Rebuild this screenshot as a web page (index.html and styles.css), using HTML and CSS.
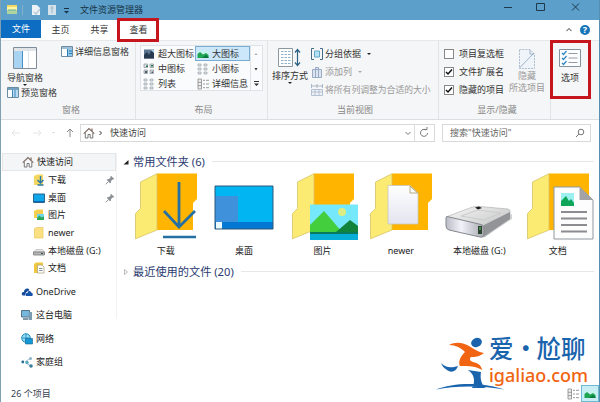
FILE: index.html
```html
<!DOCTYPE html>
<html lang="zh-CN">
<head>
<meta charset="utf-8">
<title>文件资源管理器</title>
<link rel="stylesheet" href="styles.css">
</head>
<body>
<svg class="defs" width="0" height="0">
  <defs>
    <linearGradient id="top" x1="0" y1="0" x2="1" y2="1"><stop offset="0" stop-color="#f7f7f7"/><stop offset="1" stop-color="#b9babb"/></linearGradient>
    <linearGradient id="front" x1="0" y1="0" x2="1" y2="0"><stop offset="0" stop-color="#b8bbc4"/><stop offset=".4" stop-color="#f2f2fa"/><stop offset="1" stop-color="#a6a8ae"/></linearGradient>
    <linearGradient id="paper" x1="0" y1="0" x2="0" y2="1"><stop offset="0" stop-color="#fff"/><stop offset="1" stop-color="#e3e5ef"/></linearGradient>
    <symbol id="folder" viewBox="0 0 78 68">
      <path d="M30 1.5H70V27L66 31V58H30Z" fill="#ffb500"/>
      <path d="M13.5 10 30 1.7V58L8.5 66.8V41.5L13.5 36.5Z" fill="#fbeb72" stroke="#d8c465" stroke-width=".8"/>
    </symbol>
    <symbol id="home" viewBox="0 0 12 12">
      <path d="M2.3 6V11H5V7.5H7.2V11H9.8V6" fill="#fff" stroke="#777" stroke-width="1"/>
      <path d="M.8 6.6 6 1.5 11.3 6.6M9 1.5V4" fill="none" stroke="#7d6a62" stroke-width="1.2"/>
    </symbol>
    <symbol id="pin" viewBox="0 0 10 10">
      <path d="M6 .8 9.3 4 8.3 4.6 7.6 4.4 6 6.1 5.8 8 5 8.2 1.9 5.1 2.2 4.3 4 4 5.6 2.4 5.4 1.7Z" fill="#8a9096"/><path d="M3.5 6.6.8 9.3" stroke="#8a9096"/>
    </symbol>
    <symbol id="tiles" viewBox="0 0 12 12">
      <g fill="#dde2e6" stroke="#9fa7ae" stroke-width=".7"><path d="M1 1H4V3H1ZM1 5H4V7H1ZM1 9H4V11H1ZM7 1H10V3H7ZM7 5H10V7H7ZM7 9H10V11H7Z"/></g>
    </symbol>
    <symbol id="rows" viewBox="0 0 12 12">
      <path d="M1 1H4.5V11H1ZM1 4.3H4.5M1 7.6H4.5" fill="#eee" stroke="#888" stroke-width=".8"/><path d="M6 2.3H8M9 2.3H12M6 6H8M9 6H12M6 9.7H8M9 9.7H12" stroke="#999"/>
    </symbol>
    <symbol id="pic" viewBox="0 0 12 12">
      <path d="M.5 2.5H11.5V10H.5Z" fill="#c6f2ef"/><path d="M.5 9.5V6L3 4 6 6.5 9 5 11.5 7V10H.5Z" fill="#20a652"/><path d="M5 10 9 7 11.5 9V10Z" fill="#08793f"/>
    </symbol>
  </defs>
</svg>

<div class="window">
  <header class="titlebar">
    <svg class="quick" width="74" height="20" viewBox="0 0 74 20">
      <path d="M7 5H17V14H7Z" fill="#fff3a4"/><path d="M7 5H17V7H7Z" fill="#f3d763"/><path d="M8 14V10H16V14M10 10V14M12 10V14M14 10V14" stroke="#61b59d" fill="none"/>
      <path d="M22.5 5V15" stroke="#82b1cd"/>
      <path d="M32 5H37L40 8V15H32Z" fill="#edf2f6"/><path d="M34 12 36 14 40 9" stroke="#b5c8d4" fill="none" stroke-width="1.3"/>
      <path d="M48 5H56V15H48Z" fill="#d5e3ec"/><path d="M52 6V13M50.5 8H53.5" stroke="#9cb6c7"/>
      <path d="M64 8.5H69" stroke="#173245"/><path d="M64 11H69L66.500 13.500Z" fill="#173245"/>
    </svg>
    <span class="title">文件资源管理器</span>
    <svg class="controls" width="90" height="20" viewBox="0 0 90 20"><path d="M4 7.500H12M36.500 3.500H44.500V10.500H36.500ZM72 3.500 79 10.500M79 3.500 72 10.500" fill="none" stroke="#1d3a4d"/></svg>
  </header>

  <nav class="tabs">
    <span class="tab file">文件</span><span class="tab">主页</span><span class="tab">共享</span><span class="tab">查看<i class="mark mark-tab"></i></span>
    <svg class="help" width="30" height="20" viewBox="0 0 30 20"><path d="M2.500 11 5 8.500 7.500 11" fill="none" stroke="#888" stroke-width="1.2"/><circle cx="21" cy="10" r="5" fill="#1674b8"/><text x="21" y="13" text-anchor="middle" class="q">?</text></svg>
  </nav>

  <section class="ribbon">
    <div class="group g-pane">
      <div class="body">
        <div class="stack">
          <div class="big">
            <svg width="24" height="23" viewBox="0 0 24 23"><path d="M.5.5H23.500V21.500H.5Z" fill="#fff" stroke="#7e8d99"/><path d="M1 1H23V4H1Z" fill="#e2e5e8"/><path d="M1 4H9V21H1Z" fill="#a9d3f2"/><path d="M9.500 4V21" stroke="#488fc4"/><path d="M15.500 4V21" stroke="#dde5ec"/></svg>
            <span>导航窗格</span><i class="caret"></i>
          </div>
          <div class="cmd"><svg width="12" height="12" viewBox="0 0 12 12"><path d="M.5.5H11.500V10.500H.5Z" fill="#fff" stroke="#6c8ca4"/><path d="M1 1H11V3H1Z" fill="#75a2c2"/><path d="M6 3H11V10H6Z" fill="#b9dcf4"/><path d="M5.500 3V10.500M8 3V10" stroke="#3c88bc"/></svg><span>预览窗格</span></div>
        </div>
        <div class="cmd detail"><svg width="12" height="12" viewBox="0 0 12 12"><path d="M.5.5H11.500V10.500H.5Z" fill="#fff" stroke="#6c8ca4"/><path d="M1 1H11V3H1Z" fill="#a0bed3"/><path d="M6.500 3H11V10H6.500Z" fill="#8fc6ea"/><path d="M6.500 3V10.500M8 5H11M8 7.500H11" stroke="#2d7db5"/></svg><span>详细信息窗格</span></div>
      </div>
      <div class="name">窗格</div>
    </div>

    <div class="group g-layout">
      <div class="gallery">
        <div class="view"><svg width="12" height="12" viewBox="0 0 12 12"><path d="M1 1.500H11V10.500H1Z" fill="#5c7692"/><path d="M1 10.500V7L4 4 6 7 8 3 11 4V10.500Z" fill="#273a50"/><path d="M8 2H11V5Z" fill="#a6cfe9"/></svg>超大图标</div>
        <div class="view on"><svg width="12" height="12"><use href="#pic"/></svg>大图标</div>
        <div class="view"><svg width="12" height="12" viewBox="0 0 12 12"><g stroke="#8b9197" stroke-width=".7"><path d="M1 1H4.500V4.500H1ZM7 1H10.500V4.500H7ZM1 7H4.500V10.500H1ZM7 7H10.500V10.500H7Z" fill="#dde2e5"/></g><path d="M3 2.500H5V4H3ZM8 2H10V3.500H8Z" fill="#29774f"/><path d="M2 8H4V10H2ZM8.500 8.500H10V10H8.500Z" fill="#4a5970"/></svg>中图标</div>
        <div class="view"><svg width="12" height="12"><use href="#tiles"/></svg>小图标</div>
        <div class="view"><svg width="12" height="12"><use href="#tiles"/></svg>列表</div>
        <div class="view"><svg width="12" height="12"><use href="#rows"/></svg>详细信息</div>
        <svg class="scroll" width="12" height="45" viewBox="0 0 12 45"><path d="M.5 0V45" stroke="#e0e3e6"/><path d="M4.500 9H7.500L6 7Z" fill="#aaa"/><path d="M4.500 22H7.500L6 24.500ZM4 37.500H9L6.500 40Z" fill="#333"/><path d="M4 35.500H9" stroke="#333"/></svg>
      </div>
      <div class="name">布局</div>
    </div>

    <div class="group g-current">
      <div class="body">
        <div class="big sort">
          <svg width="24" height="21" viewBox="0 0 24 21"><path d="M.5.500H14.500V18.500H.5Z" fill="#fff" stroke="#8d979e"/><path d="M3 3.500H13M3 6.500H13M3 9.500H13M3 12.500H13M3 15.500H13" stroke="#8fb3ca" stroke-dasharray="2.500 1"/><path d="M19.500 2V17M17 4.500 19.500 1.500 22 4.500M17 14.500 19.500 17.500 22 14.500" fill="none" stroke="#2d6183" stroke-width="1.2"/></svg>
          <span>排序方式</span><i class="caret"></i>
        </div>
        <div class="list">
          <div class="cmd"><svg width="12" height="12" viewBox="0 0 12 12"><path d="M3 .5H.5V11.500H3M9 .5H11.500V11.500H9" fill="none" stroke="#456b84"/><path d="M3.500 3H8.500V9H3.500Z" fill="#b4e2f5" stroke="#65a7c9"/></svg><span>分组依据</span><i class="caret"></i></div>
          <div class="cmd off"><svg width="12" height="12" viewBox="0 0 12 12"><path d="M1.500 3.500H10.500V11.500H1.500ZM4.500 1.500H7.500V11.500H4.500Z" fill="#dce4f1" stroke="#9aaac2"/></svg><span>添加列</span><i class="caret"></i></div>
          <div class="cmd off"><svg width="12" height="12" viewBox="0 0 12 12"><path d="M.5 2H11.500M.5 0V4M6 0V4M11.500 0V4" stroke="#9ba9bb" stroke-width=".8"/><path d="M.5 5.500H11.500V11.500H.5ZM4 5.500V11.500M8 5.500V11.500M.5 8H11.500" fill="#eef2f7" stroke="#a7b5c8" stroke-width=".8"/></svg><span class="fit">将所有列调整为合适的大小</span></div>
        </div>
      </div>
      <div class="name">当前视图</div>
    </div>

    <div class="group g-show">
      <div class="body">
        <div class="list">
          <div class="cmd"><i class="box"></i><span>项目复选框</span></div>
          <div class="cmd"><i class="box"><svg viewBox="0 0 8 8"><path d="M1 4 3 6 7 1.500"/></svg></i><span>文件扩展名</span></div>
          <div class="cmd"><i class="box"><svg viewBox="0 0 8 8"><path d="M1 4 3 6 7 1.500"/></svg></i><span>隐藏的项目</span></div>
        </div>
        <div class="big hide">
          <svg width="18" height="21" viewBox="0 0 18 21"><path d="M1.500.5H12L16.500 5V19.500H1.500Z" fill="#eff4fa" stroke="#aebdcd" stroke-dasharray="2 1"/><path d="M1.500 19 16 4M12 1V5H16" stroke="#9fb0c5" fill="none"/></svg>
          <span>隐藏</span><span>所选项目</span>
        </div>
      </div>
      <div class="name">显示/隐藏</div>
    </div>

    <div class="group g-options">
      <div class="big">
        <svg width="22" height="18" viewBox="0 0 22 18"><path d="M.5.5H21.500V17.500H.5Z" fill="#fcfdfe" stroke="#85929d"/><path d="M3 4 4.500 5.500 7.500 2M3 9 4.500 10.500 7.500 7M3 14 4.500 15.500 7.500 12" fill="none" stroke="#2f86c2" stroke-width="1.200"/><path d="M9.500 4.500H18.500M9.500 9H18.500M9.500 13.500H18.500" stroke="#949ca3"/></svg>
        <span>选项</span>
      </div>
      <i class="mark mark-options"></i>
    </div>
  </section>

  <div class="address">
    <svg class="arrows" width="79" height="18" viewBox="0 0 79 18"><path d="M11 9H19M14 6 11 9 14 12M32 9H40M37 6 40 9 37 12" fill="none" stroke="#e2e5e7"/><path d="M51 8.500H54" stroke="#ddd"/><path d="M69 13V5M66 8 69 5 72 8" fill="none" stroke="#888"/></svg>
    <div class="path">
      <svg width="12" height="12"><use href="#home"/></svg>
      <svg class="chev" width="6" height="8" viewBox="0 0 6 8"><path d="M1.500 2 3.500 4 1.500 6" fill="none" stroke="#333"/></svg>
      <span>快速访问</span>
      <svg class="tools" width="30" height="16" viewBox="0 0 30 16"><path d="M1.500 7 4 9.500 6.500 7" fill="none" stroke="#777"/><path d="M10.500 0V16" stroke="#ddd"/><path d="M22 5A3.500 3.500 0 1 0 23.500 8M20 4.500H23V2" fill="none" stroke="#777"/></svg>
    </div>
    <div class="search"><span>搜索"快速访问"</span><svg width="10" height="10" viewBox="0 0 10 10"><circle cx="6" cy="4" r="2.800" fill="none" stroke="#777"/><path d="M4 6 1 9" stroke="#777"/></svg></div>
  </div>

  <main class="content">
    <aside class="side">
      <div class="node top on"><svg width="12" height="12"><use href="#home"/></svg><span>快速访问</span></div>
      <div class="node"><svg width="12" height="12" viewBox="0 0 12 12"><path d="M1 2 4 .5H10V11H1Z" fill="#f5d65e"/><path d="M7.500 2V9M4.500 6 7.500 9 10.500 6M4.500 11H10.500" fill="none" stroke="#257aa9" stroke-width="1.400"/></svg><span>下载</span><svg class="pin" width="10" height="10"><use href="#pin"/></svg></div>
      <div class="node"><svg width="12" height="12" viewBox="0 0 12 12"><path d="M.5 2H11.500V10.500H.5Z" fill="#0fa6ea" stroke="#28668e"/><path d="M1 9.500H11" stroke="#086bb8"/></svg><span>桌面</span><svg class="pin" width="10" height="10"><use href="#pin"/></svg></div>
      <div class="node"><svg width="12" height="12" viewBox="0 0 12 12"><path d="M1 2 4 .5H10V9H1Z" fill="#f7cf50"/><path d="M4 5H11V11H4Z" fill="#72d5e8"/><path d="M4 9 6.500 6.500 8.500 8.500 11 7.500V11H4Z" fill="#2aa858"/></svg><span>图片</span></div>
      <div class="node"><svg width="12" height="12" viewBox="0 0 12 12"><path d="M1.500 1.500 4 .5H10V11H1.500Z" fill="#fae082" stroke="#ecc65c" stroke-width=".7"/></svg><span>newer</span></div>
      <div class="node"><svg width="12" height="12" viewBox="0 0 12 12"><path d="M3 4.500H9.500L11.500 7H.5Z" fill="#e5e5e5" stroke="#b3b3b3" stroke-width=".6"/><path d="M.5 7H11.500V10H.5Z" fill="#b4b6b8" stroke="#777" stroke-width=".8"/><path d="M8 8.500H10" stroke="#3b5b44"/></svg><span>本地磁盘 (G:)</span></div>
      <div class="node"><svg width="12" height="12" viewBox="0 0 12 12"><path d="M1 2 3 .5H10V11H1Z" fill="#f0c840"/><path d="M4.500 3H9L11 5V11H4.500Z" fill="#fff" stroke="#a69c72" stroke-width=".7"/><path d="M6 6.500H9.500M6 8.500H9.500" stroke="#8597a5"/></svg><span>文档</span></div>
      <div class="node top far"><svg width="12" height="12" viewBox="0 0 12 12"><path d="M1.500 9.500C-.5 7 2 5.500 3 6 3 2.500 7 1.500 8.500 4L5 6.500 4 9.500Z" fill="#174c9c"/><path d="M5 10C3.500 7.500 6 6.500 6.500 7 7 4 10 4.500 10 6.500 12.500 7 12 10 11 10Z" fill="#1654ac"/></svg><span>OneDrive</span></div>
      <div class="node top far"><svg width="12" height="12" viewBox="0 0 12 12"><path d="M.5 1.500H8.500V8H.5Z" fill="#75b9de" stroke="#557386"/><path d="M7.500 3H11V11H7.500Z" fill="#7a9cb2"/><path d="M2 10H7" stroke="#57768a" stroke-width="1.500"/></svg><span>这台电脑</span></div>
      <div class="node top far"><svg width="12" height="12" viewBox="0 0 12 12"><circle cx="5" cy="5" r="4.300" fill="#8edbf5" stroke="#238bbd"/><path d="M1 5H9M5 1V9" stroke="#238bbd" stroke-width=".8"/><path d="M4.500 5.500H11.500V11H4.500Z" fill="#1398d5" stroke="#17618d" stroke-width=".6"/></svg><span>网络</span></div>
      <div class="node top far"><svg width="12" height="12" viewBox="0 0 12 12"><path d="M4 6 9 2.500M5 7 10 10" stroke="#a6c4d2"/><circle cx="1.800" cy="6" r="1.400" fill="#276c8d"/><circle cx="6" cy="6.500" r="1.700" fill="#5ba8bf"/><circle cx="9.500" cy="2.500" r="1.500" fill="#8bb3c6"/><circle cx="10" cy="10" r="1.800" fill="#397c9b"/></svg><span>家庭组</span></div>
    </aside>

    <section class="files">
      <h2><svg width="8" height="8" viewBox="0 0 8 8"><path d="M6.500 2V6.500H1.500Z" fill="#222"/></svg><span>常用文件夹 (6)</span></h2>
      <div class="grid">
        <figure><svg width="78" height="68" viewBox="0 0 78 68"><use href="#folder"/><path d="M52 10V54M37 39 52 55 68 39" fill="none" stroke="#2470a3" stroke-width="2.800"/><path d="M36 65H69" stroke="#2470a3" stroke-width="2.500"/></svg><figcaption>下载</figcaption></figure>
        <figure><svg width="78" height="68" viewBox="0 0 78 68"><path d="M10 14H68V57H10Z" fill="#00b5f1"/><path d="M10 24H33V50H10Z" fill="#3f91dc"/><path d="M10 50H68V57H10Z" fill="#0377d2"/><path d="M11 50H17V57H11Z" fill="#eafaff"/><path d="M10 14H68V57H10Z" fill="none" stroke="#2c5978"/></svg><figcaption>桌面</figcaption></figure>
        <figure><svg width="78" height="68" viewBox="0 0 78 68"><use href="#folder"/><path d="M26 32.500H74V68H26Z" fill="#76e8fb"/><circle cx="58" cy="40" r="4" fill="#dced82"/><path d="M26 53 40 39 58 60H26Z" fill="#43ce3d"/><path d="M52 60 66 48 74 54V60Z" fill="#11833b"/><path d="M26 60H74V62H26Z" fill="#087b5c"/><path d="M26 62H74V68H26Z" fill="#06add6"/></svg><figcaption>图片</figcaption></figure>
        <figure><svg width="78" height="68" viewBox="0 0 78 68"><use href="#folder"/><path d="M26 13.500H48L56 21V52H26Z" fill="url(#paper)" stroke="#c8c7c2" stroke-width=".8"/><path d="M48 14V21H55.500Z" fill="#f9fafc" stroke="#a89969" stroke-width=".8"/></svg><figcaption>newer</figcaption></figure>
        <figure><svg width="78" height="68" viewBox="0 0 78 68"><path d="M44 65 71 47V42L42 57Z" fill="#d4d4d4"/><path d="M5 45 30 35.500Q34 34 39 34.500L67 37Q70 38 69 41V46L43 65Z" fill="url(#top)" stroke="#aaa" stroke-width=".6"/><path d="M43 53 69 40V47L42 65Z" fill="#929497"/><path d="M20 44 37 38 60 41 43 48Z" fill="none" stroke="#ccc"/><path d="M34 35.500 38 34.500 41 36 37 37.500Z" fill="#222"/><path d="M6 44.500 40 52.500Q43 53 43 56V62Q43 66 39 65L8 58Q5 57 5 54V47Q4.500 45 6 44.500Z" fill="url(#front)" stroke="#85878c"/><path d="M37 54H41V62H37Z" fill="#294232"/><path d="M39 55V58" stroke="#70cd65"/></svg><figcaption>本地磁盘 (G:)</figcaption></figure>
        <figure><svg width="78" height="68" viewBox="0 0 78 68"><use href="#folder"/><path d="M35 15H60.500L74 28V67H35Z" fill="#fdfdfd" stroke="#92989c"/><path d="M60.500 15V28H74Z" fill="#a3a3a6"/><path d="M42 21H55V34H42Z" fill="#9cf0ef"/><path d="M42 34V29L47 24 50 29 52 27 55 31V34Z" fill="#0fa65a"/><path d="M42 40H68M42 46.500H68M42 53H68M42 59.500H68" stroke="#8c8c91" stroke-width="1.800"/></svg><figcaption>文档</figcaption></figure>
      </div>
      <h2><svg width="8" height="8" viewBox="0 0 8 8"><path d="M2.500 1.500V6.500L5.500 4Z" fill="#fff" stroke="#aaa" stroke-width=".8"/></svg><span>最近使用的文件 (20)</span></h2>
    </section>
  </main>

  <footer class="status"><span>26 个项目</span><div class="modes"><svg width="12" height="12"><use href="#rows"/></svg><i class="mode"><svg width="12" height="12"><use href="#pic"/></svg></i></div></footer>

  <div class="brand">
    <svg width="70" height="54" viewBox="0 0 70 54">
      <ellipse cx="40.500" cy="5.500" rx="5.500" ry="4.500" transform="rotate(-25 40.500 5.500)" fill="#1964ad"/>
      <path d="M13 8C20 4 28 6 33 9 38 12 42 15 48 16 43 20 39 20 35 20 33 22 34 24 37 25 42 26 45 28 46 33 40 29 33 29 24 29 22 25 24 20 29 15 25 11 20 8 13 8Z" fill="#f16411"/>
      <path d="M5 26C10 31 15 31 22 29 20 35 15 36 11 33 8 31 6 29 5 26ZM32 33 45 35C44 41 45 46 49 51H36C40 44 38 37 32 33ZM0 52.500C17 45 49 45 68 52.500 47 48.500 19 48.500 0 52.500Z" fill="#1964ad"/>
    </svg>
    <div class="brand-text"><b>爱<i>·</i>尬聊</b><span>igaliao.com</span></div>
  </div>
</div>
</body>
</html>
```
FILE: styles.css
```css
* { box-sizing: border-box; }
body { margin: 0; font: 9px/12px "Noto Sans", "Noto Sans CJK SC", sans-serif; color: #222; background: #fff; }
i { font-style: normal; }
svg { display: block; flex: none; }
.defs { position: absolute; }
.window { position: relative; width: 600px; height: 402px; display: flex; flex-direction: column; overflow: hidden; border-left: 1px solid #7f9fb3; border-right: 1px solid #5590b3; background: #fff; white-space: nowrap; }

.titlebar { height: 20px; flex: none; display: flex; align-items: center; background: #5b9fca; margin: 0 -1px; }
.title { margin-left: 6px; color: #173245; font-size: 9px; }
.controls { margin-left: auto; margin-right: 10px; }

.tabs { height: 20px; flex: none; display: flex; align-items: center; }
.tab { width: 39px; height: 20px; text-align: center; line-height: 20px; position: relative; color: #333; }
.tab.file { width: 40px; background: #0c6dc2; color: #fff; height: 18px; line-height: 18px; align-self: flex-start; }
.help { margin-left: auto; margin-right: 5px; }
.q { font-size: 9px; font-weight: bold; fill: #fff; }
.mark { position: absolute; border: 3px solid #c4161c; }
.mark-tab { left: -2px; top: -2px; width: 42px; height: 24px; z-index: 2; }

.ribbon { height: 80px; flex: none; display: flex; background: #f5f6f7; border-top: 1px solid #e6e8ea; border-bottom: 1px solid #dcdfe2; color: #333; }
.group { position: relative; height: 78px; display: flex; flex-direction: column; justify-content: space-between; border-right: 1px solid #e1e3e5; }
.name { height: 15px; text-align: center; color: #888; }
.body { display: flex; }
.g-pane { width: 135px; padding: 6px 0 0 6px; }
.g-layout { width: 132px; padding: 4px 0 0 4px; }
.g-current { width: 171px; padding: 4px 0 0 4px; }
.g-show { width: 112px; padding: 4px 0 0 5px; }
.g-options { width: 40px; padding: 8px 0 0; border-right: 0; }
.big { display: flex; flex-direction: column; align-items: center; width: 36px; }
.big span { margin-top: 2px; }
.cmd { display: flex; align-items: center; gap: 2px; height: 12px; }
.detail { margin-left: 4px; margin-top: -1px; }
.caret { width: 0; height: 0; border: 2px solid transparent; border-top-color: #222; border-bottom: 0; }
.cmd .caret { margin-left: 4px; }
.off { color: #999; }
.off .caret { border-top-color: #aaa; }
.stack { width: 50px; }
.stack .cmd { margin-top: 0; }
.stack .big { height: 40px; }
.sort { padding-top: 3px; }
.sort span { margin-top: 1px; }
.list { display: flex; flex-direction: column; gap: 6px; padding-top: 3px; margin-left: 3px; }
.fit { font-size: 8.8px; }
.g-show .list { margin-left: 0; }
.g-show .cmd { gap: 5px; }
.box { width: 10px; height: 10px; border: 1px solid #888; background: #fff; }
.box path { fill: none; stroke: #111; stroke-width: 1.5; }
.hide { color: #999; padding-top: 4px; margin-left: 5px; }
.hide span { margin-top: 0; }
.g-options .big { width: 38px; }
.g-options .big span { margin-top: 5px; }
.mark-options { left: -1px; top: -1px; width: 41px; height: 59px; }

.gallery { position: relative; width: 123px; height: 46px; display: grid; grid-template-columns: 54px 55px 12px; grid-template-rows: repeat(3, 15px); border: 1px solid #e0e3e6; background: #fafbfc; }
.view { display: flex; align-items: center; gap: 3px; padding-left: 2px; grid-column: 1; overflow: hidden; }
.view:nth-child(even) { grid-column: 2; }
.view.on { background: #cce6fa; border: 1px solid #78acd3; padding-left: 1px; }
.scroll { grid-column: 3; grid-row: 1 / span 3; }

.address { height: 33px; flex: none; display: flex; align-items: flex-start; padding-top: 4px; color: #444; }
.path { width: 355px; height: 18px; border: 1px solid #d9d9d9; display: flex; align-items: center; padding-left: 2px; }
.chev { margin: 0 6px 0 3px; }
.tools { margin-left: auto; }
.search { width: 149px; height: 18px; margin-left: 7px; border: 1px solid #d9d9d9; display: flex; align-items: center; justify-content: space-between; padding: 0 5px 0 7px; color: #666; }

.content { flex: 1; display: flex; }
.side { width: 116px; padding-left: 1px; border-right: 1px solid #f2f2f2; height: 166px; }
.node { height: 17.7px; display: flex; align-items: center; gap: 3px; padding: 0 1px 0 31px; color: #222; }
.node.top { padding-left: 19px; }
.node.on { height: 18px; background: #f4f5f6; border: 1px solid #e5e6e7; }
.node.far { height: 23.4px; }
.node:nth-child(8) { margin-top: 3px; }
.pin { margin-left: auto; }
.files { width: 482px; padding-left: 5px; }
h2 { height: 17px; margin: 0; display: flex; align-items: center; font-size: 11.2px; line-height: 17px; font-weight: 400; color: #29396f; }
h2 span { margin-left: 3px; }
h2::after { content: ""; height: 1px; flex: 1; background: #e5e7ea; margin: 0 5px 0 7px; }
.grid { display: grid; grid-template-columns: repeat(6, 78.4px); padding: 2px 0 6px 5px; }
figure { margin: 0; }
figcaption { text-align: center; height: 12px; margin-top: 5px; padding-right: 1px; }

.status { height: 17px; flex: none; display: flex; align-items: center; justify-content: space-between; padding-left: 10px; color: #35414f; }
.modes { display: flex; align-items: center; gap: 2px; }
.mode { width: 18px; height: 17px; display: flex; align-items: center; justify-content: center; background: #c8edf5; border: 1px solid #6dbbd2; }

.brand { position: absolute; left: 435px; top: 337px; display: flex; }
.brand-text { display: flex; flex-direction: column; margin: -2px 0 0 -17px; }
.brand b { color: #1964ad; font: 500 24.500px/26px "Noto Sans CJK SC", sans-serif; }
.brand b i { display: inline-block; width: 23px; text-align: center; }
.brand span { color: #f16411; font: 500 18px/24px "Noto Sans", sans-serif; margin-top: 2px; }
```
